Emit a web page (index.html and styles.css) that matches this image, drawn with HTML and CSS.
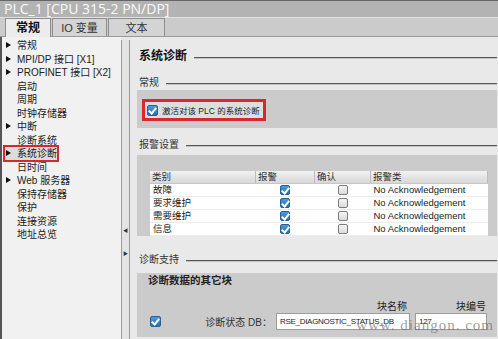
FILE: index.html
```html
<!DOCTYPE html>
<html lang="zh">
<head>
    <meta charset="UTF-8">
    <title>PLC_1 属性</title>
    <link rel="stylesheet" href="styles.css">
</head>
<body>
    <div class="window">
        <div class="titlebar">PLC_1 [CPU 315-2 PN/DP]</div>
        <div class="tabs">
            <div class="tab active">常规</div>
            <div class="tab">IO 变量</div>
            <div class="tab">文本</div>
        </div>
        <div class="main">
            <ul class="nav">
                <li class="has-sub">常规</li>
                <li class="has-sub">MPI/DP 接口 [X1]</li>
                <li class="has-sub">PROFINET 接口 [X2]</li>
                <li>启动</li>
                <li>周期</li>
                <li>时钟存储器</li>
                <li class="has-sub">中断</li>
                <li>诊断系统</li>
                <li class="has-sub selected"><span>系统诊断</span></li>
                <li>日时间</li>
                <li class="has-sub">Web 服务器</li>
                <li>保持存储器</li>
                <li>保护</li>
                <li>连接资源</li>
                <li>地址总览</li>
            </ul>
            <div class="splitter">
                <span class="arrow left">&#9664;</span>
                <span class="arrow right">&#9654;</span>
            </div>
            <div class="content">
                <div class="heading main-heading"><span>系统诊断</span></div>

                <div class="heading h-general"><span>常规</span></div>
                <div class="panel panel-general">
                    <label class="check highlight"><span class="box checked"></span>激活对该 PLC 的系统诊断</label>
                </div>

                <div class="heading h-alarms"><span>报警设置</span></div>
                <div class="panel panel-alarms">
                    <table class="alarms">
                        <thead>
                            <tr><th class="c-type">类别</th><th class="c-alarm">报警</th><th class="c-ack">确认</th><th>报警类</th></tr>
                        </thead>
                        <tbody>
                            <tr><td>故障</td><td class="mid"><span class="box checked"></span></td><td class="mid"><span class="box"></span></td><td>No Acknowledgement</td></tr>
                            <tr><td>要求维护</td><td class="mid"><span class="box checked"></span></td><td class="mid"><span class="box"></span></td><td>No Acknowledgement</td></tr>
                            <tr><td>需要维护</td><td class="mid"><span class="box checked"></span></td><td class="mid"><span class="box"></span></td><td>No Acknowledgement</td></tr>
                            <tr><td>信息</td><td class="mid"><span class="box checked"></span></td><td class="mid"><span class="box"></span></td><td>No Acknowledgement</td></tr>
                        </tbody>
                    </table>
                </div>

                <div class="heading h-support"><span>诊断支持</span></div>
                <div class="panel panel-support">
                    <div class="sub-title">诊断数据的其它块</div>
                    <div class="col-heads">
                        <span class="col-name">块名称</span>
                        <span class="col-num">块编号</span>
                    </div>
                    <div class="db-row">
                        <span class="box checked"></span>
                        <span class="db-label">诊断状态 DB：</span>
                        <span class="field field-name">RSE_DIAGNOSTIC_STATUS_DB</span>
                        <span class="field field-num">127</span>
                    </div>
                </div>
            </div>
        </div>
        <div class="watermark">www. diangon. com</div>
    </div>
</body>
</html>
```

FILE: styles.css
```css
body {
    margin: 0;
    font-family: "Liberation Sans", "Noto Sans CJK SC", sans-serif;
    font-size: 10px;
    color: #222;
}
.window {
    width: 498px;
    height: 339px;
    overflow: hidden;
    position: relative;
    background: #e9e9e9;
}
.titlebar {
    height: 16px;
    line-height: 16px;
    background: #b3b3b3;
    border-top: 1px solid #666;
    border-bottom: 1px solid #e2e2e2;
    color: #fafafa;
    font-family: "Open Sans", "Noto Sans CJK SC", sans-serif;
    font-size: 14px;
    padding-left: 4px;
}
.tabs {
    height: 18px;
    background: #cbcbcb;
    display: flex;
    padding-left: 5px;
    border-bottom: 1px solid #9a9a9a;
}
.tab {
    height: 18px;
    line-height: 18px;
    box-sizing: border-box;
    border: 1px solid #8e8e8e;
    border-bottom: none;
    margin-right: 1px;
    background: #d4d4d4;
    color: #333;
    font-size: 11px;
    text-align: center;
}
.tab:nth-child(1) { width: 46px; }
.tab:nth-child(2) { width: 55px; }
.tab:nth-child(3) { width: 57px; }
.tab.active {
    background: #ececec;
    font-weight: bold;
    font-size: 12px;
    color: #111;
    height: 19px;
}
.main {
    display: flex;
    height: 302px;
}
.nav {
    list-style: none;
    margin: 0;
    padding: 2px 0 0 0;
    width: 121px;
    flex-shrink: 0;
    background: #f1f1f1;
    border-left: 2px solid #555;
    box-sizing: border-box;
}
.nav li {
    height: 13.5px;
    line-height: 13.5px;
    padding-left: 15px;
    position: relative;
    white-space: nowrap;
    color: #222;
}
.nav li.has-sub::before {
    content: "";
    position: absolute;
    left: 4px;
    top: 3px;
    border-left: 5px solid #111;
    border-top: 3.5px solid transparent;
    border-bottom: 3.5px solid transparent;
}
.nav li.selected span {
    display: inline-block;
    margin-left: -12px;
    padding: 0 0 0 12px;
    outline: 2px solid #d6282e;
    line-height: 13px;
    background: #dcdcdc;
}
.splitter {
    width: 9px;
    flex-shrink: 0;
    background: #e3e3e3;
    border-left: 1px solid #9b9b9b;
    border-right: 1px solid #9b9b9b;
    box-sizing: border-box;
    position: relative;
    margin-top: 3px;
}
.arrow {
    position: absolute;
    left: 1px;
    font-size: 5px;
    color: #333;
}
.arrow.left { top: 186px; }
.arrow.right { top: 209px; }
.content {
    flex: 1;
    min-width: 0;
    padding: 13px 1px 0 7px;
}
.heading {
    display: flex;
    align-items: center;
    height: 13px;
    line-height: 13px;
    margin-left: 2px;
    color: #333;
    font-size: 10px;
}
.heading span {
    margin-right: 7px;
}
.heading::after {
    content: "";
    flex: 1;
    border-top: 1px solid #555;
    border-bottom: 1px solid #c4c4c4;
    margin-top: 2px;
}
.main-heading {
    font-size: 12px;
    font-weight: bold;
    color: #111;
    margin-bottom: 13px;
}
.h-general { margin-bottom: 1px; }
.h-alarms { margin-bottom: 4px; }
.h-support { margin-bottom: 7px; }
.panel {
    background: #cbcbcb;
    box-sizing: border-box;
}
.panel-general {
    height: 38px;
    padding: 12px 0 0 8px;
    margin-bottom: 10px;
}
.check {
    display: inline-flex;
    align-items: center;
    gap: 4px;
    height: 14px;
    font-size: 8.5px;
    color: #222;
}
.check.highlight {
    outline: 3px solid #d6282e;
    padding: 1px 3px 1px 2px;
    background: #dedede;
}
.box {
    display: inline-block;
    width: 9px;
    height: 9px;
    border: 1px solid #7c7c7c;
    border-radius: 2px;
    background: linear-gradient(#f4f4f4, #dcdcdc);
    vertical-align: middle;
    position: relative;
    flex-shrink: 0;
}
.box.checked {
    background: linear-gradient(#4c9bd6, #2a6fb0);
    border-color: #2c5f8f;
}
.box.checked::after {
    content: "";
    position: absolute;
    left: 2px;
    top: 0;
    width: 3px;
    height: 6px;
    border: solid #fff;
    border-width: 0 2px 2px 0;
    transform: rotate(40deg);
}
.panel-alarms {
    height: 81px;
    padding: 16px 9px 0 13px;
    margin-bottom: 17px;
}
.alarms {
    width: 100%;
    border-collapse: collapse;
    background: #fff;
    font-size: 9.5px;
}
.alarms th {
    text-align: left;
    font-weight: normal;
    height: 12px;
    line-height: 12px;
    padding: 0 2px;
    background: linear-gradient(#f2f2f2, #d8d8d8);
    border-right: 1px solid #bdbdbd;
    border-bottom: 1px solid #c7c7c7;
    color: #333;
}
.alarms td {
    height: 12px;
    padding: 0 3px;
    line-height: 12px;
    border-bottom: 1px solid #ececec;
}
.alarms .c-type { width: 101px; }
.alarms .c-alarm { width: 54px; }
.alarms .c-ack { width: 51px; }
.alarms td.mid {
    text-align: center;
    padding: 0;
}
.alarms td.mid .box {
    width: 8px;
    height: 8px;
}
.panel-support {
    height: 64px;
    padding: 0 10px 0 11px;
}
.sub-title {
    font-weight: bold;
    font-size: 10.5px;
    line-height: 14px;
    color: #222;
}
.col-heads {
    display: flex;
    margin-top: 13px;
    height: 13px;
    line-height: 13px;
}
.col-name { margin-left: 229px; }
.col-num { margin-left: 49px; }
.db-row {
    display: flex;
    align-items: center;
}
.db-row > .box { margin-left: 2px; }
.db-label {
    width: 111px;
    flex-shrink: 0;
    text-align: right;
    margin-right: 4px;
    color: #333;
}
.field {
    height: 17px;
    line-height: 15px;
    background: #fff;
    border: 1px solid #9c9c9c;
    box-sizing: border-box;
    padding-left: 3px;
    font-size: 8px;
    letter-spacing: -0.3px;
    white-space: nowrap;
    overflow: hidden;
    flex-shrink: 0;
    color: #222;
}
.field-name { width: 134px; margin-right: 5px; }
.field-num { width: 72px; }
.watermark {
    position: absolute;
    right: 4px;
    bottom: 5px;
    font-family: "Liberation Serif", serif;
    font-size: 15px;
    letter-spacing: 1px;
    color: rgba(100, 100, 100, 0.65);
}
```
